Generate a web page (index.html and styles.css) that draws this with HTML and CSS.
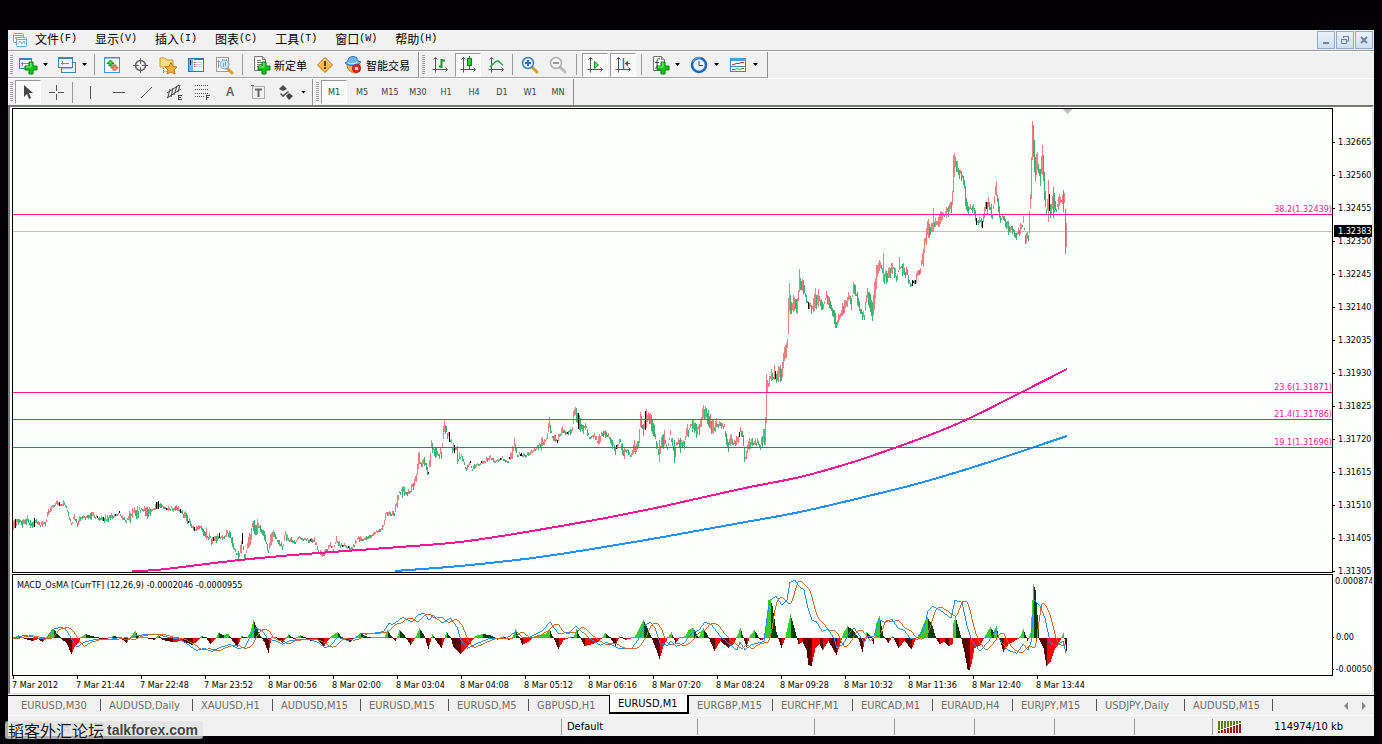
FILE: index.html
```html
<!DOCTYPE html>
<html lang="zh-CN">
<head>
<meta charset="utf-8">
<title>EURUSD,M1</title>
<link rel="stylesheet" href="styles.css">
</head>
<body>
<svg class="defs" aria-hidden="true">
  <defs>
    <g id="axes" fill="none" stroke="#555"><path d="M5.500 2.500V17.500M2.500 14.500H17.500M3.500 4.500L5.500 2.500L7.500 4.500M15.500 12.500L17.500 14.500L15.500 16.500"/></g>
    <g id="plus"><path d="M7 3h4v4h4v4h-4v4H7v-4H3V7h4z" fill="#17c41b" stroke="#0a7d12"/><path d="M8 4h1v4H4" fill="none" stroke="#8df08d"/></g>
    <g id="page"><path d="M3.500 1.500h8l3 3v11h-11z" fill="#fff" stroke="#777"/><path d="M11.500 1.500v3h3" fill="#ddd" stroke="#777"/></g>
    <g id="lens"><path d="M12 12l5 5" stroke-width="3" stroke-linecap="round"/></g>
  </defs>
</svg>
<div class="window">
  <nav class="menubar">
    <svg class="app-icon" width="16" height="16" viewBox="0 0 16 16" fill="#fff" stroke="#6da5e0"><rect x="1.500" y="1.500" width="10" height="9" rx="1"/><path d="M2 3.500h9M3 7l1-2 1 2" fill="none"/><rect x="4.500" y="5.500" width="10" height="9" rx="1"/><path d="M5 7.500h9M6 12l2-3 2 3 2-3 1 3" fill="none"/></svg>
    <button class="menu">文件<span class="key">(F)</span></button>
    <button class="menu">显示<span class="key">(V)</span></button>
    <button class="menu">插入<span class="key">(I)</span></button>
    <button class="menu">图表<span class="key">(C)</span></button>
    <button class="menu">工具<span class="key">(T)</span></button>
    <button class="menu">窗口<span class="key">(W)</span></button>
    <button class="menu">帮助<span class="key">(H)</span></button>
    <div class="window-buttons">
      <button class="wbtn" aria-label="Minimize"><svg width="12" height="12" viewBox="0 0 12 12"><path d="M3 8h6v2H3z" fill="#6f8298"/></svg></button>
      <button class="wbtn" aria-label="Restore"><svg width="12" height="12" viewBox="0 0 12 12" fill="none" stroke="#6f8298"><path d="M4 2.500h6M4.500 4V2M9.500 2v5H8M2 5.500h6M2.500 5v4.500h5V5"/></svg></button>
      <button class="wbtn" aria-label="Close"><svg width="12" height="12" viewBox="0 0 12 12" stroke="#6f8298" stroke-width="2"><path d="M3 3l6 6M9 3l-6 6"/></svg></button>
    </div>
  </nav>

  <div class="toolbar first">
    <div class="group">
      <i class="grip"></i>
      <button class="tool combo" aria-label="New chart"><svg width="20" height="20" viewBox="0 0 20 20"><rect x="1.500" y="3.500" width="12" height="10" fill="#edf6fe" stroke="#3d86bd"/><path d="M2 4.500h11" stroke="#3d86bd"/><path d="M4.500 7v4M3 8.500h8" stroke="#888"/><use href="#plus" x="4" y="4"/></svg><b class="caret"></b></button>
      <button class="tool combo" aria-label="Profiles"><svg width="20" height="20" viewBox="0 0 20 20" fill="#edf6fe" stroke="#3d86bd"><rect x="4.500" y="7.500" width="14" height="10"/><rect x="1.500" y="2.500" width="14" height="10"/><path d="M2 3.500h13M4 13h11"/><path d="M5.500 6v4M4 8.500h8" stroke="#888"/></svg><b class="caret"></b></button>
      <i class="sep"></i>
      <button class="tool" aria-label="Market watch"><svg width="20" height="20" viewBox="0 0 20 20"><rect x="2.500" y="2.500" width="15" height="15" fill="#fff" stroke="#3d93d8"/><path d="M3 3.500h14" stroke="#8cc4f2"/><path d="M8.500 5l3.500 3.500H10V11H7V8.500H5z" fill="#3fd152" stroke="#128a28"/><path d="M12.500 16l3.500-3.500H14V10h-3v2.500H9z" fill="#f79a63" stroke="#cf4a20"/></svg></button>
      <button class="tool" aria-label="Data window"><svg width="20" height="20" viewBox="0 0 20 20" fill="none" stroke="#5f5f5f"><circle cx="10.500" cy="10.500" r="5" stroke-width="1.500"/><path d="M10.500 3v6M10.500 12v6M3 10.500h6M12 10.500h6"/></svg></button>
      <button class="tool" aria-label="Navigator"><svg width="20" height="20" viewBox="0 0 20 20"><path d="M2 3h5l2 2h6v7H2z" fill="#f8dc83" stroke="#c99b33"/><path d="M5.500 13v5M5.500 16.500h4" stroke="#777" stroke-dasharray="1 1"/><path d="M13 7.500l2 4 4 .500-3 3 1 4-4-2-4 2 1-4-3-3 4-.500z" fill="#fbb03c" stroke="#b8731a"/></svg></button>
      <button class="tool" aria-label="Terminal"><svg width="20" height="20" viewBox="0 0 20 20"><rect x="2.500" y="3.500" width="15" height="13" fill="#fff" stroke="#2f75b8"/><path d="M3 4h4v12H3z" fill="#77b7ee"/><path d="M4.500 5v5" stroke="#222"/><path d="M8 4.500h9" stroke="#2f75b8"/><path d="M8 7.500h8M8 9.500h8M8 11.500h8" stroke="#bcd" /><path d="M8 7.500h1M8 9.500h1M8 11.500h1" stroke="#d33"/></svg></button>
      <button class="tool" aria-label="Strategy tester"><svg width="20" height="20" viewBox="0 0 20 20"><rect x="2.500" y="2.500" width="12" height="14" fill="#fff" stroke="#9b9b9b"/><path d="M4.500 5v8M8.500 4v4M3 6.500h3M12.500 4v4" stroke="#999"/><use href="#lens" stroke="#d5a12c" x="1" y="1"/><circle cx="10.500" cy="9.500" r="4.500" fill="#c9e4fa" stroke="#6fa5d4"/><path d="M9.500 8v4M11.500 7v4" stroke="#6fa5d4" fill="none"/></svg></button>
      <i class="sep wide"></i>
      <button class="tool labelled"><svg width="20" height="20" viewBox="0 0 20 20"><use href="#page"/><path d="M6 5.500h4M6 7.500h6M6 9.500h6M6 11.500h4" stroke="#777"/><use href="#plus" x="4" y="4"/></svg>新定单</button>
      <button class="tool" aria-label="Metaeditor"><svg width="20" height="20" viewBox="0 0 20 20"><path d="M10 2.500L17.500 10L10 17.500L2.500 10z" fill="#f9b84c" stroke="#b9741a" stroke-linejoin="round"/><path d="M4 10L10 4L16 10" stroke="#ffe2a0" fill="none"/><path d="M9 6h2v5H9zM9 12h2v2H9z" fill="#73380a"/></svg></button>
      <button class="tool labelled"><svg width="20" height="20" viewBox="0 0 20 20"><path d="M4 9c0 6 3 8 8 9 4 0 5-4 5-9z" fill="#efae56" stroke="#b87725"/><path d="M2 8c2-1 3-2 4-5 2-2 6-2 8 0 0 3 1 3 4 4-2 4-12 5-16 1z" fill="#71b6eb" stroke="#2a74b5"/><path d="M5 8c3 1 7 1 9-1" stroke="#d4edff" fill="none"/><circle cx="13.500" cy="13.500" r="4" fill="#d9341b" stroke="#9d1f0c"/><rect x="12" y="12" width="3" height="3" fill="#fff"/></svg>智能交易</button>
    </div>
    <div class="group">
      <i class="grip"></i>
      <button class="tool" aria-label="Bar chart"><svg width="20" height="20" viewBox="0 0 20 20"><use href="#axes"/><path d="M11.500 4v9M9 11.500h2M12 5.500h3" stroke="#129c2a" stroke-width="2"/></svg></button>
      <button class="tool on" aria-label="Candlesticks"><svg width="20" height="20" viewBox="0 0 20 20"><use href="#axes"/><path d="M11.500 1v13" stroke="#0e7d1f"/><rect x="9.500" y="3.500" width="4" height="7" fill="#25d22d" stroke="#0e7d1f"/></svg></button>
      <button class="tool" aria-label="Line chart"><svg width="20" height="20" viewBox="0 0 20 20"><use href="#axes"/><path d="M4 12c3-2 5-7 8-6 2 1 3 3 5 4" fill="none" stroke="#2da84a" stroke-width="1.500"/></svg></button>
      <i class="sep"></i>
      <button class="tool" aria-label="Zoom in"><svg width="20" height="20" viewBox="0 0 20 20"><use href="#lens" stroke="#d0a02e"/><circle cx="8" cy="8" r="5.500" fill="#dceefc" stroke="#3a80c8" stroke-width="1.500"/><path d="M8 5v6M5 8h6" stroke="#3a6fae" stroke-width="2"/></svg></button>
      <button class="tool" aria-label="Zoom out"><svg width="20" height="20" viewBox="0 0 20 20"><use href="#lens" stroke="#b8b8b8"/><circle cx="8" cy="8" r="5.500" fill="#f2f2f2" stroke="#adadad" stroke-width="1.500"/><path d="M5 8h6" stroke="#999" stroke-width="2"/></svg></button>
      <i class="sep wide"></i>
      <button class="tool on" aria-label="Auto scroll"><svg width="20" height="20" viewBox="0 0 20 20"><use href="#axes"/><path d="M9.500 6.500v7l4-3.500z" fill="#5fe36a" stroke="#128c26"/></svg></button>
      <button class="tool on" aria-label="Chart shift"><svg width="20" height="20" viewBox="0 0 20 20"><use href="#axes"/><path d="M10.500 3v11" stroke="#2d7fc4" stroke-width="1.500"/><path d="M12 8.500h5" stroke="#b52c0c"/><path d="M12 8.500l3-3v6z" fill="#b52c0c"/></svg></button>
      <i class="sep wide"></i>
      <button class="tool combo" aria-label="Indicators"><svg width="20" height="20" viewBox="0 0 20 20"><use href="#page"/><path d="M10 4c-2-1-3 0-3 2v5c0 2-1 2-2 2M5 7.500h4" fill="none" stroke="#444"/><use href="#plus" x="4" y="4"/></svg><b class="caret"></b></button>
      <button class="tool combo" aria-label="Periods"><svg width="20" height="20" viewBox="0 0 20 20"><circle cx="10" cy="10" r="7" fill="#e6f3fd" stroke="#1d67bd" stroke-width="2.500"/><path d="M4 7a7 7 0 0 1 8-4" fill="none" stroke="#76b9f2"/><path d="M10 6v4.500h4" fill="none" stroke="#444"/></svg><b class="caret"></b></button>
      <button class="tool combo" aria-label="Templates"><svg width="20" height="20" viewBox="0 0 20 20"><rect x="2.500" y="3.500" width="15" height="13" fill="#fff" stroke="#3d86bd"/><path d="M2 4.500h16" stroke="#4c9ddb" stroke-width="3"/><path d="M3 11.500h14" stroke="#3d86bd"/><path d="M4 9.500h2l2-1h3l2-1h3" fill="none" stroke="#b5382a"/><path d="M4 14.500h3l2-1 3 1 2-1h2" fill="none" stroke="#1f9a33"/></svg><b class="caret"></b></button>
    </div>
  </div>

  <div class="toolbar second">
    <div class="group">
      <i class="grip"></i>
      <button class="tool on" aria-label="Cursor"><svg width="20" height="20" viewBox="0 0 20 20"><path d="M6 3v12l3-3 2 5 2-1-2-5h4z" fill="#484848"/></svg></button>
      <button class="tool" aria-label="Crosshair"><svg width="20" height="20" viewBox="0 0 20 20" stroke="#555"><path d="M10.500 3v6M10.500 12v6M3 10.500h6M12 10.500h6"/></svg></button>
      <i class="sep"></i>
      <button class="tool" aria-label="Vertical line"><svg width="20" height="20" viewBox="0 0 20 20" stroke="#555"><path d="M10.500 4v13"/></svg></button>
      <button class="tool" aria-label="Horizontal line"><svg width="20" height="20" viewBox="0 0 20 20" stroke="#555"><path d="M5 10.500h12"/></svg></button>
      <button class="tool" aria-label="Trendline"><svg width="20" height="20" viewBox="0 0 20 20" stroke="#555"><path d="M5 16L16 5"/></svg></button>
      <button class="tool" aria-label="Equidistant channel"><svg width="20" height="20" viewBox="0 0 20 20" stroke="#444"><path d="M3 11L15 3M3 16L17 7M6 7l-2 8M9 6l-2 9M13 4l-3 9M16 3l-2 7"/><path d="M14.500 13v5M14 13.500h4M14 15.500h3M14 17.500h4"/></svg></button>
      <button class="tool" aria-label="Fibonacci retracement"><svg width="20" height="20" viewBox="0 0 20 20" stroke="#555"><path d="M3 3.500h14M3 7.500h14M3 11.500h14M3 14.500h9" stroke-dasharray="1 1"/><path d="M14.500 13v5M14 13.500h4M14 15.500h3" /></svg></button>
      <button class="tool letter">A</button>
      <button class="tool" aria-label="Text label"><svg width="20" height="20" viewBox="0 0 20 20" stroke="#666"><rect x="4.500" y="4.500" width="12" height="12" fill="none" stroke-dasharray="1 1"/><path d="M7 7.500h7M10.500 7v8" stroke-width="2"/><path d="M3 3.500h3"/></svg></button>
      <button class="tool combo" aria-label="Arrows"><svg width="20" height="20" viewBox="0 0 20 20"><path d="M7 3l4 4-4 2-4-2zM5 11l2 2 5-4 1 1-6 5-3-3zM13 11l4 3-4 4-3-4z" fill="#4a4a4a"/></svg><b class="caret"></b></button>
    </div>
    <div class="group">
      <i class="grip"></i>
      <button class="tool on period">M1</button>
      <button class="tool period">M5</button>
      <button class="tool period">M15</button>
      <button class="tool period">M30</button>
      <button class="tool period">H1</button>
      <button class="tool period">H4</button>
      <button class="tool period">D1</button>
      <button class="tool period">W1</button>
      <button class="tool period">MN</button>
    </div>
  </div>

  <main class="chart">
    <div class="row price-row">
      <svg class="pane" id="price" role="img" aria-label="EURUSD price"></svg>
      <div class="axis price-axis">
        <span>1.32665</span><span>1.32560</span><span>1.32455</span><span>1.32350</span><span>1.32245</span><span>1.32140</span><span>1.32035</span><span>1.31930</span><span>1.31825</span><span>1.31720</span><span>1.31615</span><span>1.31510</span><span>1.31405</span><span>1.31305</span>
        <strong class="price-tag">1.32383</strong>
      </div>
    </div>
    <div class="row macd-row">
      <svg class="pane" id="macd" role="img" aria-label="MACD"></svg>
      <div class="axis macd-axis"><span>0.000874</span><span class="zero">0.00</span><span>-0.00050</span></div>
    </div>
    <div class="times">
      <span>7 Mar 2012</span><span>7 Mar 21:44</span><span>7 Mar 22:48</span><span>7 Mar 23:52</span><span>8 Mar 00:56</span><span>8 Mar 02:00</span><span>8 Mar 03:04</span><span>8 Mar 04:08</span><span>8 Mar 05:12</span><span>8 Mar 06:16</span><span>8 Mar 07:20</span><span>8 Mar 08:24</span><span>8 Mar 09:28</span><span>8 Mar 10:32</span><span>8 Mar 11:36</span><span>8 Mar 12:40</span><span>8 Mar 13:44</span>
    </div>
  </main>

  <div class="tabs">
    <button class="tab w92 start">EURUSD,M30</button>
    <button class="tab w92">AUDUSD,Daily</button>
    <button class="tab w80">XAUUSD,H1</button>
    <button class="tab w88">AUDUSD,M15</button>
    <button class="tab w88">EURUSD,M15</button>
    <button class="tab w80">EURUSD,M5</button>
    <button class="tab w80 last">GBPUSD,H1</button>
    <button class="tab w80 active">EURUSD,M1</button>
    <button class="tab w84">EURGBP,M15</button>
    <button class="tab w80">EURCHF,M1</button>
    <button class="tab w80">EURCAD,M1</button>
    <button class="tab w80">EURAUD,H4</button>
    <button class="tab w84">EURJPY,M15</button>
    <button class="tab w88">USDJPY,Daily</button>
    <button class="tab w88">AUDUSD,M15</button>
    <div class="scrollers">
      <button class="scroll" aria-label="Scroll left"><svg width="6" height="8" viewBox="0 0 6 8"><path d="M4 0v8L0 4z" fill="#888"/></svg></button>
      <button class="scroll" aria-label="Scroll right"><svg width="6" height="8" viewBox="0 0 6 8"><path d="M1 0v8l4-4z" fill="#888"/></svg></button>
    </div>
  </div>

  <footer class="status">
    <span class="cell help">寻求帮助, 请按F1键</span>
    <span class="cell profile">Default</span>
    <span class="cell c116"></span><span class="cell c80"></span><span class="cell c80"></span><span class="cell c80"></span><span class="cell c80"></span><span class="cell c78"></span>
    <span class="cell net">
      <svg width="24" height="12" viewBox="0 0 24 12"><path d="M1 0v9M4 0v8M7 0v7M10 0v6M13 0v5M16 0v4M19 0v3M22 0v2" stroke="#5f7d12" stroke-width="2"/><path d="M1 10v2M4 9v3M7 8v4M10 7v5M13 6v6M16 5v7M19 4v8M22 3v9" stroke="#a11d14" stroke-width="2"/></svg>
      114974/10 kb
    </span>
  </footer>
  <div class="watermark"><span class="wm-cn">韬客外汇论坛</span><span>talkforex.com</span></div>
</div>
<script src="chart.js"></script>
</body>
</html>
```

FILE: styles.css
```css
* { box-sizing: border-box; }
body {
  margin: 0;
  min-height: 100vh;
  padding: 30px 8px 8px;
  display: flex;
  background: #020003;
  color: #000;
  font-family: "DejaVu Sans Condensed", "DejaVu Sans", "Noto Sans CJK SC", sans-serif;
  font-stretch: condensed;
  font-size: 11px;
}
button {
  margin: 0;
  padding: 0;
  border: 0;
  background: none;
  color: inherit;
  font: inherit;
}
svg { display: block; flex: none; }
.defs { position: absolute; width: 0; height: 0; }
.window {
  position: relative;
  flex: 1;
  min-width: 0;
  display: flex;
  flex-direction: column;
  background: #f1f1f1;
}

.menubar {
  display: flex;
  align-items: center;
  height: 21px;
  padding-left: 4px;
  border-bottom: 1px solid #9a9a9a;
}
.app-icon { margin-right: 7px; }
.menu {
  margin-right: 18px;
  padding-bottom: 2px;
  display: flex;
  align-items: center;
  font-family: "Noto Sans CJK SC", sans-serif;
  font-size: 12px;
  line-height: 18px;
}
.key { font-family: "Liberation Mono", monospace; font-size: 10px; }
.window-buttons { margin-left: auto; display: flex; gap: 1px; padding-right: 1px; }
.wbtn {
  width: 18px;
  height: 18px;
  display: flex;
  align-items: center;
  justify-content: center;
  border: 1px solid #93a9c8;
  background: linear-gradient(#eaf2fa, #cfdff0);
}

.toolbar { display: flex; height: 27px; border-top: 1px solid #fff; }
.group {
  display: flex;
  align-items: center;
  padding-right: 1px;
  border-right: 1px solid #8e8e8e;
  border-bottom: 1px solid #a5a5a5;
}
.group + .group { border-left: 1px solid #fff; }
.first .group { padding-right: 4px; }
.second .group { border-bottom: 0; }
.grip {
  width: 3px;
  height: 20px;
  margin: 0 1px 0 2px;
  background: repeating-linear-gradient(#a0a0a0 0 1px, #f1f1f1 1px 2px);
}
.sep { width: 1px; height: 21px; margin: 0 3px 0 2px; background: #999; }
.sep.wide { margin: 0 4px; }
.tool {
  width: 28px;
  height: 24px;
  display: flex;
  align-items: center;
  justify-content: center;
  flex: none;
  color: #444;
}
.tool.on {
  width: 26px;
  margin: 0 1px;
  border: 1px solid #999;
  border-right-color: #fff;
  border-bottom-color: #fff;
  background: #f9f9f9;
}
.combo { width: 39px; justify-content: flex-start; padding-left: 4px; gap: 5px; }
.caret {
  width: 5px;
  height: 3px;
  background: #000;
  clip-path: polygon(0 0, 100% 0, 50% 100%);
}
.labelled {
  width: auto;
  padding: 0 4px;
  gap: 3px;
  color: #000;
  font-family: "Noto Sans CJK SC", sans-serif;
  font-size: 11px;
}
.letter { font-family: "Liberation Sans", sans-serif; font-size: 12px; font-weight: bold; color: #666; }
.period { font-size: 9px; }

.chart {
  flex: 1;
  display: flex;
  flex-direction: column;
  min-height: 0;
  padding: 1px 0 0 2px;
  border-top: 2px solid #777;
  border-left: 2px solid #777;
  border-right: 2px solid #e3e3e3;
  border-bottom: 1px solid #e3e3e3;
  background: #fdfffd;
  font-size: 9px;
}
.row { display: flex; }
.price-row { flex: 1; min-height: 0; }
.macd-row { height: 102px; margin-top: 1px; }
.pane {
  flex: 1;
  min-width: 0;
  height: 100%;
  border: 1px solid #000;
  shape-rendering: crispEdges;
}
.axis {
  position: relative;
  width: 39px;
  display: flex;
  flex-direction: column;
  line-height: 10px;
  white-space: nowrap;
}
.axis span { display: flex; align-items: center; flex: none; }
.axis span::before { content: ""; width: 2px; height: 1px; margin-right: 3px; background: #000; }
.price-axis { gap: 23px; padding-top: 29px; height: 0; }
.price-tag {
  position: absolute;
  top: 117px;
  left: 1px;
  right: 0;
  padding-left: 4px;
  background: #000;
  color: #fff;
  line-height: 12px;
  font-weight: normal;
}
.macd-axis { padding-top: 2px; overflow: hidden; }
.macd-axis span::before { width: 1px; margin-right: 2px; }
.macd-axis .zero { margin: 46px 0 22px; }
.times { display: flex; height: 17px; overflow: hidden; }
.times span { flex: 0 0 64px; line-height: 13px; white-space: nowrap; }
.times span::before { content: ""; display: block; width: 1px; height: 3px; margin-left: 1px; background: #000; }
.fib-label, .pane-label { font-size: 9px; }
.fib-label { fill: #ff1493; text-anchor: end; }

.tabs {
  display: flex;
  height: 20px;
  margin-top: 1px;
  padding-left: 1px;
  border-top: 1px solid #000;
  color: #6e6e6e;
  font-size: 11px;
}
.tab {
  position: relative;
  height: 18px;
  padding-left: 8px;
  flex: none;
  text-align: left;
  white-space: nowrap;
  line-height: 15px;
}
.tab.start { padding-left: 12px; }
.tab::after { content: ""; position: absolute; right: 0; top: 3px; width: 1px; height: 12px; background: #555; }
.tab.active { height: 19px; margin-top: -1px; border: 1px solid #000; border-top: 0; border-right-width: 2px; border-bottom-width: 2px; background: #fff; color: #000; }
.tab.active::after, .tab.last::after { content: none; }
.w80 { width: 80px; }
.w84 { width: 84px; }
.w88 { width: 88px; }
.w92 { width: 92px; }
.scrollers { margin-left: auto; display: flex; gap: 11px; padding-right: 7px; }

.status {
  display: flex;
  align-items: flex-end;
  height: 21px;
  padding-bottom: 1px;
  border-top: 1px solid #fff;
}
.cell { height: 16px; line-height: 16px; border-right: 1px solid #999; flex: none; white-space: nowrap; }
.help { flex: 0 1 554px; padding-left: 2px; color: #999; font-family: "Noto Sans CJK SC", sans-serif; }
.profile { width: 136px; padding-left: 5px; }
.c116 { width: 117px; }
.c80 { width: 80px; }
.c78 { width: 78px; }
.net { flex: 1; display: flex; align-items: center; justify-content: space-between; padding: 0 31px 0 5px; border: 0; }
.watermark {
  position: absolute;
  left: -3px;
  bottom: -3px;
  display: flex;
  align-items: center;
  gap: 3px;
  height: 18px;
  padding: 0 5px 0 3px;
  border-radius: 3px;
  background: rgba(225, 225, 225, .75);
  color: #444;
  font: bold 14px "Liberation Sans", sans-serif;
  text-shadow: 0 0 2px #fff;
}
.wm-cn { font: 16px "Noto Sans CJK SC", sans-serif; color: #111; }
```

FILE: chart.js
```js
// Price bars: x, top, bottom
const bars = [
13,523,528,17,516,525,20,517,524,24,520,527,27,517,523,32,523,530,35,517,523,40,524,526,45,520,525,48,511,515,52,505,508,56,502,505,60,503,505,63,501,505,66,505,508,69,516,519,71,523,525,74,513,520,77,524,527,80,514,519,85,517,519,92,513,518,100,517,520,105,515,522,110,516,519,114,514,518,119,511,514,122,516,520,126,520,522,129,512,524,134,506,512,137,506,520,139,508,511,143,509,513,149,504,517,152,510,512,157,502,507,163,506,508,170,507,511,177,505,510,182,511,515,186,513,525,190,522,526,195,527,531,200,523,528,204,529,536,208,533,540,212,538,544,217,534,540,223,536,539,227,530,534,231,535,542,234,545,551,238,553,560,242,535,548,244,556,560,246,546,556,250,532,548,252,519,530,255,521,537,258,520,528,262,530,534,265,534,540,268,550,556,271,530,543,275,535,538,279,542,548,282,545,550,285,532,538,290,538,543,295,541,543,299,536,538,305,539,541,312,538,543,315,540,545,319,550,555,323,552,556,327,548,551,330,543,548,333,548,550,336,536,541,340,544,548,344,543,546,349,547,551,353,545,548,357,537,541,363,538,540,369,535,538,374,532,535,380,529,531,384,520,526,386,508,516,390,512,517,394,512,516,396,500,510,399,490,496,403,486,495,407,490,495,410,489,493,413,480,487,416,472,480,418,451,467,420,460,468,424,457,466,428,468,475,430,452,466,431,436,450,433,443,454,436,449,457,441,450,457,443,429,440,444,423,434,447,430,438,451,438,444,452,445,452,456,446,450,458,455,464,461,454,458,466,468,471,470,461,463,472,468,470,475,464,467,482,461,464,490,456,460,495,461,463,502,457,459,508,461,463,512,448,456,514,437,450,517,453,457,522,453,458,528,452,456,533,450,452,537,446,449,541,438,448,545,440,444,549,418,430,552,434,440,557,438,442,562,427,434,566,430,434,572,426,433,573,409,425,575,407,415,577,415,428,582,422,434,586,423,430,589,434,440,594,433,437,598,438,446,602,430,436,606,432,436,611,436,444,615,448,454,620,438,444,623,450,458,627,446,452,630,455,457,634,443,452,638,438,450,640,415,430,643,424,434,645,412,428,648,412,420,653,420,434,656,437,448,659,452,462,661,438,450,664,430,445,667,447,450,670,431,437,674,448,462,676,442,448,680,438,450,683,440,450,687,427,436,691,421,430,696,425,436,700,421,432,703,403,418,706,410,418,710,415,430,714,425,435,716,420,428,720,418,430,724,425,430,727,440,450,731,436,444,735,442,450,740,428,436,742,430,438,744,447,455,745,455,462,749,440,450,755,438,444,760,444,450,763,432,442,765,420,443,766,373,425,767,375,396,768,382,392,771,370,378,774,374,382,778,367,380,781,367,380,784,345,362,787,337,352,788,300,338,789,286,312,791,300,312,794,297,312,797,300,312,798,286,300,799,270,292,801,280,292,804,285,294,808,300,308,812,302,312,815,290,308,818,291,304,822,304,312,826,290,300,830,302,310,834,311,323,836,321,328,840,312,320,844,300,312,848,294,302,851,299,308,853,282,290,856,290,300,860,309,318,864,312,318,867,287,302,869,294,308,872,302,320,874,285,308,876,265,288,878,261,272,881,262,272,884,270,282,888,270,280,892,262,272,896,272,280,900,262,270,903,265,275,907,272,280,910,282,287,914,280,284,918,271,278,921,262,270,923,245,265,925,235,245,927,220,240,930,225,236,934,218,228,938,216,226,942,212,220,947,208,216,951,203,212,952,188,208,953,155,190,955,154,170,958,168,174,961,172,180,964,178,188,965,188,211,967,200,212,971,207,213,974,206,214,976,218,228,979,216,222,982,220,226,985,204,212,988,200,210,992,210,218,994,195,204,996,181,195,998,200,212,1000,216,222,1004,216,222,1008,220,234,1012,228,234,1016,232,238,1020,226,236,1023,217,224,1025,232,242,1028,232,240,1029,210,236,1030,190,212,1031,155,200,1032,121,160,1033,126,160,1035,160,184,1037,154,168,1040,172,186,1042,145,170,1044,170,200,1046,205,218,1048,188,205,1050,204,216,1053,190,212,1056,205,215,1058,196,208,1061,195,205,1064,192,205,1065,205,254,1066,222,247];
// Wicks that stand out from their neighbours: x, top, bottom
const spikes = [[111,513,518],[137,506,519],[457,446,464],[549,417,428],[575,407,415],[645,411,430],[659,440,462],[664,430,446],[674,440,463],[744,448,462],[774,365,380],[799,269,292],[803,280,294],[853,282,294],[872,302,321],[883,253,282],[899,257,270],[933,208,232],[996,181,196],[1032,121,160],[1042,145,175],[1048,180,222],[1053,187,218],[1063,190,212],[1065,209,254],[1066,223,247]];
const noBody = [15,34,59,97,103,115,119,156,158,166,180,188,194,213,219,242,310,342,348,428,449,454,470,481,500,509,520,521,557,567,578,616,645,739,775,808,912,913,915,976,982,986,1049];
const histogram = [13,0,18,3,25,-1,32,-3,38,-1,42,-4,45,-1,48,4,53,9,58,3,61,-1,66,-5,71,-16,74,-9,78,-5,80,0,85,4,95,1,104,-2,112,2,119,1,126,-5,130,1,135,7,139,0,147,0,154,-2,158,3,162,-2,172,-4,182,-3,192,-7,198,-2,201,2,206,0,210,-6,214,-2,218,5,223,3,228,4,232,-3,237,-9,241,2,246,0,250,6,253,18,256,11,260,2,264,-4,268,-15,271,0,275,1,282,-5,288,4,294,-1,300,3,310,-3,317,-1,323,-9,327,-3,331,2,337,6,342,0,350,-4,357,2,360,5,370,0,378,1,384,1,387,8,391,2,395,-3,399,8,404,3,410,-7,415,0,419,10,424,2,428,-11,432,4,435,-2,441,-10,446,6,450,1,453,-9,460,-16,466,-10,475,2,482,4,490,3,497,-2,503,2,508,-2,512,0,515,9,519,0,522,-7,529,-3,534,2,545,4,549,9,553,0,558,-11,563,-2,570,1,573,0,576,9,580,0,584,-8,592,-6,598,-4,605,5,610,0,615,-8,619,2,625,-2,634,1,638,8,643,18,648,8,652,-2,656,-12,659,-21,663,-8,667,0,671,6,675,-5,679,0,685,2,688,8,693,10,698,0,703,10,708,1,714,-13,720,-3,728,-10,734,-5,737,3,740,10,743,0,746,-9,750,3,754,8,760,-2,764,-1,766,18,768,38,770,39,772,32,776,6,781,-10,785,1,790,24,794,10,798,-6,802,-4,806,-12,808,-27,811,-28,815,-10,819,-6,822,-12,828,-3,836,-17,840,-5,843,5,847,12,852,8,857,2,862,-14,866,6,871,1,873,-6,876,15,879,22,883,2,888,-5,892,2,898,-10,904,-3,911,-11,916,0,920,6,923,14,927,21,932,12,936,-1,939,-6,944,-4,948,-8,952,-6,953,15,955,22,960,3,964,-14,967,-31,969,-32,971,-26,974,-10,980,-7,984,1,990,11,993,6,996,12,998,3,1003,-14,1008,-6,1014,-3,1019,0,1023,9,1027,-3,1030,5,1033,54,1035,48,1039,-2,1043,-10,1046,-28,1050,-24,1054,-12,1060,-2,1063,5,1066,-13];
const macd = [13,0,16,1,25,3,35,1,46,-1,53,9,60,11,65,10,71,0,77,-9,84,-4,95,-1,110,-1,120,1,128,-2,134,2,145,4,158,4,168,1,177,0,186,-5,196,-12,204,-10,212,-13,220,-9,230,-6,237,-10,245,-9,251,3,256,10,262,8,268,-1,275,-2,282,-6,290,-2,300,-1,310,-1,318,-4,324,-9,330,-8,338,1,347,-2,355,0,361,5,372,5,384,7,389,15,393,14,403,21,412,16,419,24,424,25,429,18,433,23,442,15,450,20,457,11,461,-2,467,-10,480,-4,490,0,507,0,516,7,522,1,530,1,543,8,550,16,558,5,570,6,576,12,588,1,600,-7,607,-4,618,-10,632,-10,640,1,644,13,650,16,655,10,660,-5,668,-7,671,-3,676,-8,684,-5,693,6,699,8,705,16,711,14,720,2,733,-9,737,-12,740,-4,745,-12,752,-6,764,-3,767,20,770,38,776,42,782,33,787,38,790,56,795,58,799,52,804,48,808,30,812,18,816,17,822,7,828,9,834,0,837,-10,843,-6,850,6,854,10,858,5,864,-4,868,2,874,2,879,19,885,16,892,19,898,10,904,8,910,0,918,-1,924,10,928,27,933,32,940,28,951,20,955,38,962,36,967,12,972,-3,980,-13,988,-4,996,8,1000,-2,1008,-12,1017,-15,1023,-6,1028,-12,1031,-4,1034,38,1040,32,1045,20,1050,-4,1056,-8,1063,-3,1066,-15];
const slow = [132,571,156,570,240,560,305,554,400,547,460,542,520,533,600,519,660,507,700,498,750,487,800,477,850,463,900,446,940,431,970,418,1020,393,1067,369];
const slower = [395,571,460,566,540,557,640,541,740,523,800,512,860,498,920,483,980,465,1067,436];

const FIRST = 13, LAST = 1066, ZERO = 638;

function sample(data, step, col, x) {
  if (x <= data[0]) return data[col];
  for (let i = step; i < data.length; i += step) {
    if (data[i] >= x) {
      const t = (x - data[i - step]) / (data[i] - data[i - step]);
      return data[i - step + col] + t * (data[i + col] - data[i - step + col]);
    }
  }
  return data[data.length - step + col];
}
const bar = (x, top, bottom) => `M${x} ${top}h1V${bottom}h-1z`;
const filled = (parts, color) => `<path d="${parts.join('')}" fill="${color}"/>`;
const line = (points, color, width) =>
  `<polyline points="${points.join(' ')}" fill="none" stroke="${color}" stroke-width="${width}"/>`;

// Smooth curve through every point of a flat x,y list
function curve(data, color) {
  const n = data.length / 2;
  const p = i => { const k = Math.max(0, Math.min(n - 1, i)); return [data[2 * k], data[2 * k + 1]]; };
  let d = `M${p(0)}`;
  for (let i = 0; i < n - 1; i++) {
    const [a, b, c, e] = [p(i - 1), p(i), p(i + 1), p(i + 2)];
    const step = (c[0] - b[0]) / 3;
    const s1 = (c[1] - a[1]) / (c[0] - a[0]), s2 = (e[1] - b[1]) / (e[0] - b[0]);
    d += `C${b[0] + step} ${b[1] + s1 * step} ${c[0] - step} ${c[1] - s2 * step} ${c}`;
  }
  return `<path d="${d}" fill="none" stroke="${color}" stroke-width="2"/>`;
}

function drawPrice() {
  let seed = 7;
  const rand = () => (seed = (seed * 16807) % 2147483647) / 2147483647;
  const up = [], down = [], flat = [];
  let previous = 526;
  for (let x = FIRST; x <= LAST; x++) {
    let top = sample(bars, 3, 1, x), bottom = sample(bars, 3, 2, x);
    const wild = Math.min(4, (bottom - top) / 2);
    top += (rand() - .4) * 2 * wild;
    bottom += (rand() - .6) * 2 * wild;
    const spike = spikes.find(s => s[0] === x);
    if (spike) { top = spike[1]; bottom = spike[2]; }
    top = Math.round(top);
    bottom = Math.max(top + 2, Math.round(bottom));
    const mid = (top + bottom) / 2;
    const rising = x === LAST || mid + (rand() - .5) * 3 < previous;
    (noBody.includes(x) ? flat : rising ? up : down).push(bar(x, top, bottom));
    previous = mid;
  }
  const levels = [[214, '38.2(1.32439)'], [392, '23.6(1.31871)'], [419, '21.4(1.31786)'], [447, '19.1(1.31696)']];
  document.getElementById('price').innerHTML =
    '<rect x="0" y="122" width="100%" height="1" fill="#c0c0c0"/>' +
    '<g transform="translate(-13 -109)">' +
    filled(up, '#f08080') + filled(down, '#3cb371') + filled(flat, '#000') +
    curve(slow, '#ff1493') + curve(slower, '#1e90ff') +
    '<path d="M1062 109h10l-5 5z" fill="#c0c0c0"/></g>' +
    levels.map(([y, label]) =>
      `<rect x="0" y="${y - 109}" width="100%" height="1" fill="#ff1493"/>` +
      `<text class="fib-label" x="100%" y="${y - 111}">${label}</text>`).join('');
}

function drawMacd() {
  const groups = { '#32cd32': [], '#004000': [], '#ff0000': [], '#5a0000': [] };
  const fast = [], signal = [];
  let previous = 0;
  for (let x = FIRST; x <= LAST; x++) {
    const v = sample(histogram, 2, 1, x);
    const y = Math.round(ZERO - v);
    const rising = v >= previous;
    if (v >= 0) groups[rising ? '#32cd32' : '#004000'].push(bar(x, Math.min(y, ZERO - 1), ZERO));
    else groups[rising ? '#ff0000' : '#5a0000'].push(bar(x, ZERO, Math.max(y, ZERO + 1)));
    previous = v;
    fast.push(`${x},${Math.round(ZERO - sample(macd, 2, 1, x))}`);
    let sum = 0;
    for (let k = 4; k <= 9; k++) sum += sample(macd, 2, 1, x - k);
    signal.push(`${x},${Math.round(ZERO - sum / 6)}`);
  }
  document.getElementById('macd').innerHTML =
    '<g transform="translate(-13 -575)">' +
    Object.entries(groups).map(([color, parts]) => filled(parts, color)).join('') +
    line(fast, '#1e90ff', 1) + line(signal, '#d2691e', 1) + '</g>' +
    '<text class="pane-label" x="4" y="13">MACD_OsMA [CurrTF] (12,26,9) -0.0002046 -0.0000955</text>';
}

drawPrice();
drawMacd();
```
